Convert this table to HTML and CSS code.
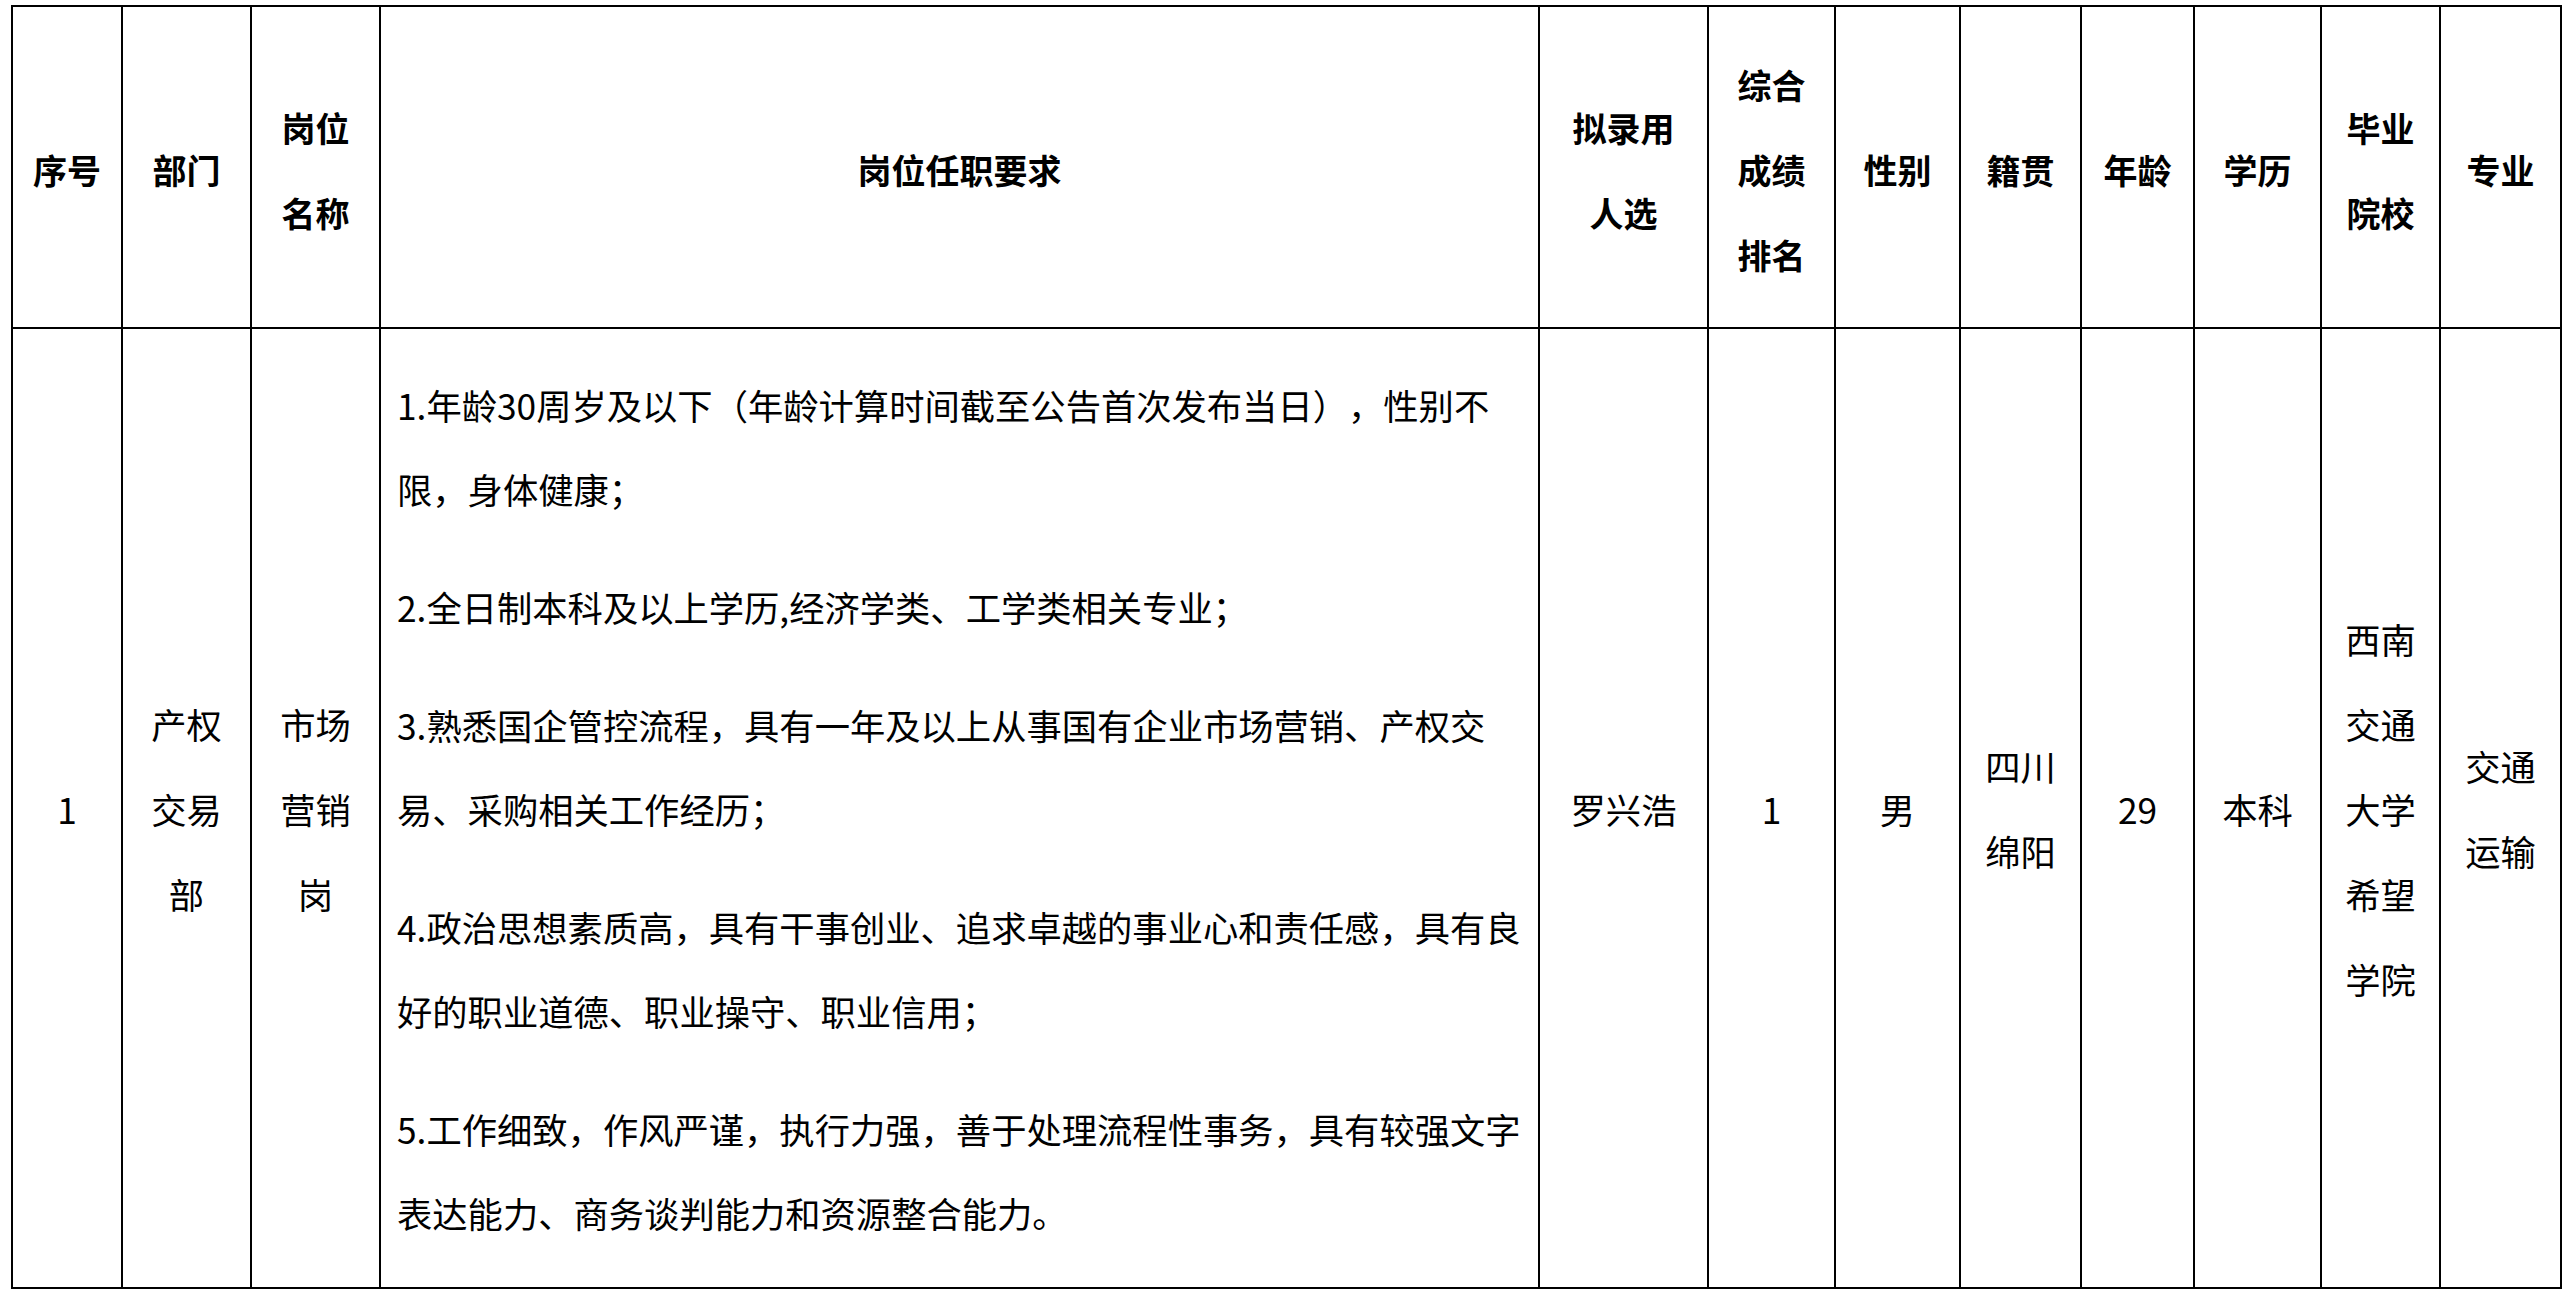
FILE: index.html
```html
<!DOCTYPE html>
<html lang="zh-CN">
<head>
<meta charset="utf-8">
<title>拟录用人选</title>
<link rel="stylesheet" href="styles.css">
</head>
<body>
<table class="grid">
  <colgroup>
    <col class="c-no">
    <col class="c-dept">
    <col class="c-post">
    <col class="c-req">
    <col class="c-name">
    <col class="c-rank">
    <col class="c-sex">
    <col class="c-origin">
    <col class="c-age">
    <col class="c-edu">
    <col class="c-school">
    <col class="c-major">
  </colgroup>
  <thead>
    <tr class="head-row">
      <th>序号</th>
      <th>部门</th>
      <th>岗位<br>名称</th>
      <th>岗位任职要求</th>
      <th>拟录用<br>人选</th>
      <th>综合<br>成绩<br>排名</th>
      <th>性别</th>
      <th>籍贯</th>
      <th>年龄</th>
      <th>学历</th>
      <th>毕业<br>院校</th>
      <th>专业</th>
    </tr>
  </thead>
  <tbody>
    <tr class="body-row">
      <td>1</td>
      <td>产权<br>交易<br>部</td>
      <td>市场<br>营销<br>岗</td>
      <td class="req">
        <p>1.年龄30周岁及以下（年龄计算时间截至公告首次发布当日），性别不<br>限，身体健康；</p>
        <p>2.全日制本科及以上学历,经济学类、工学类相关专业；</p>
        <p>3.熟悉国企管控流程，具有一年及以上从事国有企业市场营销、产权交<br>易、采购相关工作经历；</p>
        <p>4.政治思想素质高，具有干事创业、追求卓越的事业心和责任感，具有良<br>好的职业道德、职业操守、职业信用；</p>
        <p>5.工作细致，作风严谨，执行力强，善于处理流程性事务，具有较强文字<br>表达能力、商务谈判能力和资源整合能力。</p>
      </td>
      <td>罗兴浩</td>
      <td>1</td>
      <td>男</td>
      <td>四川<br>绵阳</td>
      <td>29</td>
      <td>本科</td>
      <td>西南<br>交通<br>大学<br>希望<br>学院</td>
      <td>交通<br>运输</td>
    </tr>
  </tbody>
</table>
</body>
</html>
```

FILE: styles.css
```css
html, body {
  margin: 0;
  padding: 0;
  background: #ffffff;
}

body {
  font-family: "Noto Sans CJK SC", "Noto Sans", sans-serif;
  color: #000000;
  text-spacing-trim: space-all;
}

.grid {
  margin: 5px 0 0 11px;
  width: 2551px;
  table-layout: fixed;
  border-collapse: collapse;
  border: 2px solid #000;
}

.c-no { width: 110px; }
.c-dept { width: 129px; }
.c-post { width: 129px; }
.c-req { width: 1159px; }
.c-name { width: 169px; }
.c-rank { width: 127px; }
.c-sex { width: 125px; }
.c-origin { width: 121px; }
.c-age { width: 113px; }
.c-edu { width: 127px; }
.c-school { width: 119px; }
.c-major { width: 121px; }

.grid th,
.grid td {
  border: 2px solid #000;
  text-align: center;
  vertical-align: middle;
  padding: 0;
  white-space: nowrap;
}

.head-row {
  height: 322px;
}

.grid th {
  font-size: 34px;
  font-weight: 700;
  line-height: 85px;
  padding-top: 5px;
}

.body-row {
  height: 960px;
}

.grid td {
  font-size: 35.3px;
  font-weight: 400;
  line-height: 85px;
}

.grid td.req {
  text-align: left;
  padding: 2px 16px 0 16px;
  line-height: 84px;
}

.req p {
  margin: 0 0 34px 0;
}

.req p:last-child {
  margin-bottom: 0;
}
```
